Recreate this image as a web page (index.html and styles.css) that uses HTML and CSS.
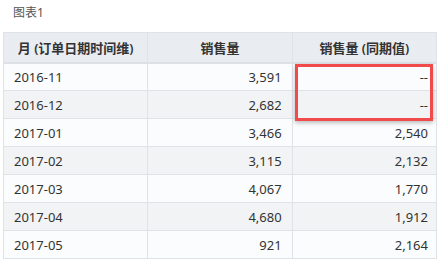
FILE: index.html
```html
<!DOCTYPE html>
<html lang="zh-CN">
<head>
    <meta charset="UTF-8">
    <title>图表1</title>
    <link rel="stylesheet" href="styles.css">
</head>
<body>
    <div class="chart">
        <div class="chart-title">图表1</div>
        <div class="table-wrap">
            <table class="data-table">
                <thead>
                    <tr>
                        <th>月 (订单日期时间维)</th>
                        <th>销售量</th>
                        <th>销售量 (同期值)</th>
                    </tr>
                </thead>
                <tbody>
                    <tr><td>2016-11</td><td class="num">3,591</td><td class="num">--</td></tr>
                    <tr><td>2016-12</td><td class="num">2,682</td><td class="num">--</td></tr>
                    <tr><td>2017-01</td><td class="num">3,466</td><td class="num">2,540</td></tr>
                    <tr><td>2017-02</td><td class="num">3,115</td><td class="num">2,132</td></tr>
                    <tr><td>2017-03</td><td class="num">4,067</td><td class="num">1,770</td></tr>
                    <tr><td>2017-04</td><td class="num">4,680</td><td class="num">1,912</td></tr>
                    <tr><td>2017-05</td><td class="num">921</td><td class="num">2,164</td></tr>
                </tbody>
            </table>
            <div class="highlight-box"></div>
        </div>
    </div>
</body>
</html>
```

FILE: styles.css
```css
* {
    margin: 0;
    padding: 0;
    box-sizing: border-box;
}

body {
    font-family: "Noto Sans", "Noto Sans CJK SC", sans-serif;
    background: #ffffff;
    color: #333;
}

.chart {
    width: 441px;
    height: 266px;
    padding: 0 4px 0 3px;
}

.chart-title {
    font-size: 12px;
    color: #555;
    line-height: 16px;
    padding: 5px 0 0 10px;
    height: 32px;
}

.table-wrap {
    position: relative;
}

.data-table {
    width: 434px;
    border-collapse: collapse;
    table-layout: fixed;
    font-size: 13px;
}

.data-table th,
.data-table td {
    border: 1px solid #dfe3e8;
    white-space: nowrap;
}

.data-table th {
    background: #e9ecf0;
    font-weight: 600;
    color: #333;
    height: 30px;
    border-bottom: 2px solid #dde1e6;
    text-align: center;
}

.data-table td {
    height: 28px;
    padding: 0 10px;
    color: #333;
}

.data-table tbody tr:nth-child(odd) td {
    background: #fbfcfd;
}

.data-table tbody tr:nth-child(even) td {
    background: #f1f3f5;
}

.data-table td.num {
    text-align: right;
}

.data-table td:last-child {
    padding-right: 8px;
}

.highlight-box {
    position: absolute;
    left: 292px;
    top: 32px;
    width: 138px;
    height: 57px;
    border: 3px solid #f04a4a;
    box-shadow: 0 2px 4px rgba(0, 0, 0, 0.25);
}
```
